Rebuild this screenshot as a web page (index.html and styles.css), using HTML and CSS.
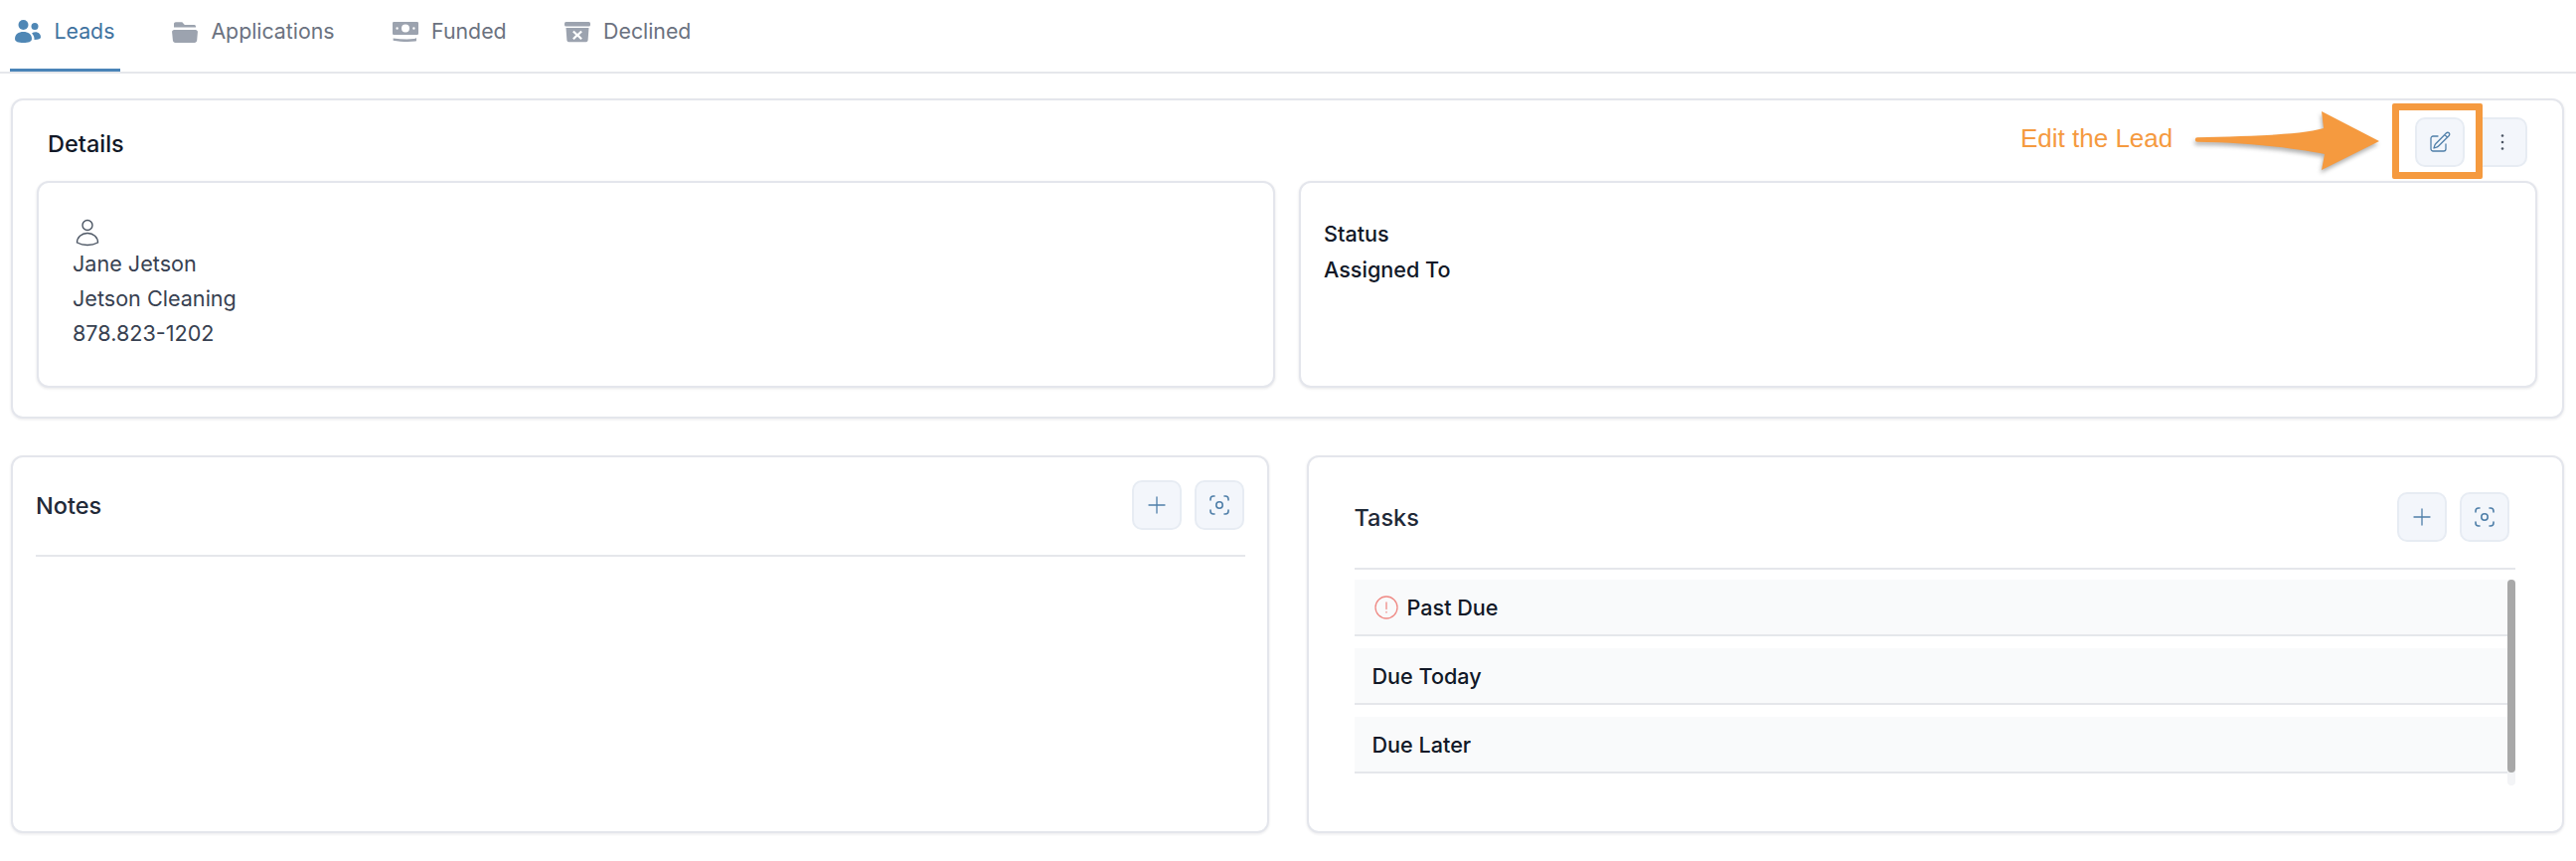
FILE: index.html
```html
<!DOCTYPE html>
<html lang="en">
<head>
<meta charset="utf-8">
<title>Lead details</title>
<link rel="stylesheet" href="styles.css">
</head>
<body>
<nav class="tabs">
  <a class="tab tab-active">
    <svg class="tab-icon" viewBox="0 0 26 24"><circle cx="8.500" cy="6" r="5"/><circle cx="20" cy="7.500" r="3.500"/><path d="M0 20c0-4.500 3.600-7 8.500-7s8.500 2.500 8.500 7c0 3-3.500 4-8.500 4S0 23 0 20z"/><path d="M17 14.500c1-.8 2.300-1.200 3.700-1.200 3.200 0 5.300 2.200 5.300 5.200 0 1.500-2 2.300-6.500 2.500.2-2.500-.6-4.700-2.500-6.500z"/></svg>
    <span>Leads</span>
  </a>
  <a class="tab">
    <svg class="tab-icon" viewBox="0 0 26 24"><path d="M2 5c0-1 .8-1.700 1.800-1.700h6.500l2.500 2.600h9.500c1 0 1.700.7 1.700 1.700v1H2z"/><path d="M2.200 11h21.600c1.200 0 2.200 1 2.100 2.200l-.7 8.300c-.1 1.400-1.200 2.500-2.600 2.500H3.500C2.100 24 1 22.900.9 21.500L.1 13.200C0 12 1 11 2.200 11z"/></svg>
    <span>Applications</span>
  </a>
  <a class="tab">
    <svg class="tab-icon" viewBox="0 0 26 24"><path fill-rule="evenodd" d="M1.200 3h23.600A1.200 1.200 0 0 1 26 4.200v10.600a1.200 1.200 0 0 1-1.200 1.200H1.200A1.200 1.200 0 0 1 0 14.800V4.200A1.200 1.200 0 0 1 1.200 3zM13 5.500a4 4 0 1 0 0 8 4 4 0 0 0 0-8zM4.600 8.300a1.200 1.200 0 1 0 0 2.400 1.200 1.200 0 0 0 0-2.400zM21.400 8.300a1.200 1.200 0 1 0 0 2.400 1.200 1.200 0 0 0 0-2.400z"/><path d="M.6 19.500c7 1 15 1.400 21 .6 1-.2 1.800-.6 2.400-1.100v3.200l-1.200.4c-7 .9-15 .4-22.200-.9z"/></svg>
    <span>Funded</span>
  </a>
  <a class="tab">
    <svg class="tab-icon" viewBox="0 0 26 24"><rect x="0" y="3" width="26" height="4.500" rx="1.500"/><path fill-rule="evenodd" d="M1.500 9h23l-.9 12.500a2 2 0 0 1-2 1.800H4.400a2 2 0 0 1-2-1.800zM9.600 11.700l-1.500 1.500 3.200 3.100-3.200 3.100 1.500 1.500 3.400-3.200 3.400 3.200 1.500-1.500-3.200-3.100 3.200-3.100-1.500-1.500-3.400 3.200z"/></svg>
    <span>Declined</span>
  </a>
</nav>

<main class="page">
  <section class="card details">
    <header class="details-head">
      <h2 class="details-title">Details</h2>
      <div class="actions">
        <button class="icon-btn" type="button">
          <svg class="btn-icon" viewBox="0 0 24 24"><path d="M16.862 4.487l1.687-1.688a1.875 1.875 0 112.652 2.652L10.582 16.070a4.500 4.500 0 01-1.897 1.130L6 18l.8-2.685a4.500 4.500 0 011.130-1.897l8.932-8.931zm0 0L19.500 7.125M18 14v4.750A2.250 2.250 0 0115.750 21H5.250A2.250 2.250 0 013 18.750V8.250A2.250 2.250 0 015.250 6H10"/></svg>
        </button>
        <button class="icon-btn icon-btn-more" type="button">
          <svg class="dots-icon" viewBox="0 0 4 18"><circle cx="2" cy="2.500" r="1.300"/><circle cx="2" cy="9" r="1.300"/><circle cx="2" cy="15.500" r="1.300"/></svg>
        </button>
      </div>
    </header>
    <div class="details-grid">
      <div class="subcard subcard-contact">
        <svg class="person-icon" viewBox="0 0 24 28"><circle cx="12" cy="6.500" r="5"/><path d="M1.500 24c0-5.500 4.500-9.500 10.500-9.500S22.500 18.500 22.500 24c-3 1.600-6.500 2.500-10.500 2.500S4.500 25.600 1.500 24z"/></svg>
        <p class="contact-line">Jane Jetson</p>
        <p class="contact-line">Jetson Cleaning</p>
        <p class="contact-line">878.823-1202</p>
      </div>
      <div class="subcard subcard-status">
        <p class="status-line">Status</p>
        <p class="status-line">Assigned To</p>
      </div>
    </div>
    <span class="note-text">Edit the Lead</span>
    <svg class="note-arrow" viewBox="0 0 200 70">
      <path class="note-arrow-fill" d="M2 32.300C50 31 105 30 129 23L127 6l58 30-58 29 3-16C100 43 50 37 2 36.700a2.200 2.200 0 0 1 0-4.400z"/>
    </svg>
    <span class="note-box"></span>
  </section>

  <div class="lower">
    <section class="card notes">
      <header class="panel-head notes-head">
        <h2 class="panel-title">Notes</h2>
        <div class="actions actions-wide">
          <button class="icon-btn" type="button">
            <svg class="btn-icon" viewBox="0 0 24 24"><path d="M12 4v16M4 12h16"/></svg>
          </button>
          <button class="icon-btn" type="button">
            <svg class="btn-icon btn-icon-focus" viewBox="0 0 24 24"><path d="M3 7V6a3 3 0 0 1 3-3h1M17 3h1a3 3 0 0 1 3 3v1M21 17v1a3 3 0 0 1-3 3h-1M7 21H6a3 3 0 0 1-3-3v-1"/><circle cx="12" cy="12" r="3.200"/></svg>
          </button>
        </div>
      </header>
    </section>

    <section class="card tasks">
      <header class="panel-head tasks-head">
        <h2 class="panel-title">Tasks</h2>
        <div class="actions actions-wide">
          <button class="icon-btn" type="button">
            <svg class="btn-icon" viewBox="0 0 24 24"><path d="M12 4v16M4 12h16"/></svg>
          </button>
          <button class="icon-btn" type="button">
            <svg class="btn-icon btn-icon-focus" viewBox="0 0 24 24"><path d="M3 7V6a3 3 0 0 1 3-3h1M17 3h1a3 3 0 0 1 3 3v1M21 17v1a3 3 0 0 1-3 3h-1M7 21H6a3 3 0 0 1-3-3v-1"/><circle cx="12" cy="12" r="3.200"/></svg>
          </button>
        </div>
      </header>
      <div class="task-list">
        <div class="task-row">
          <svg class="alert-icon" viewBox="0 0 24 24"><circle cx="12" cy="12" r="11"/><path d="M12 7v6.500M12 16.500v.6"/></svg>
          <span>Past Due</span>
        </div>
        <div class="task-row"><span>Due Today</span></div>
        <div class="task-row"><span>Due Later</span></div>
        <div class="scroll-track"><div class="scroll-thumb"></div></div>
      </div>
    </section>
  </div>
</main>
</body>
</html>
```
FILE: styles.css
```css
* { box-sizing: border-box; }

html, body {
  margin: 0;
  padding: 0;
  background: #fff;
  height: 866px;
  overflow: hidden;
  font-family: Inter, "Liberation Sans", sans-serif;
}

p, h2 { margin: 0; }

.tabs {
  display: flex;
  height: 74px;
  padding-left: 10px;
  border-bottom: 2px solid #e5e7eb;
}

.tab {
  display: flex;
  align-items: center;
  gap: 13.500px;
  height: 72px;
  padding: 0 5.500px 10px 5px;
  margin-right: 47.500px;
  font-size: 21.300px;
  font-weight: 400;
  color: #6b7280;
}

.tab-active {
  color: #3f729f;
  border-bottom: 3px solid #4a84b8;
  padding-bottom: 7px;
  margin-right: 47px;
}

.tab-icon {
  width: 26px;
  height: 24px;
  fill: #9ca3af;
  flex: none;
}

.tab-active .tab-icon { fill: #4f87b5; }

.page {
  padding: 25px 12px 0 11px;
}

.card {
  position: relative;
  background: #fff;
  border: 2px solid #e4e6ec;
  border-radius: 12px;
  box-shadow: 0 1px 3px rgba(17, 24, 39, 0.09);
}

.details {
  height: 322px;
  padding: 0 25px 0 24px;
}

.details-head {
  display: flex;
  align-items: center;
  justify-content: space-between;
  height: 81px;
  padding: 3px 10px 0 11px;
}

.details-title {
  margin-top: 2px;
  font-size: 23.500px;
  font-weight: 500;
  color: #111827;
}

.actions {
  display: flex;
  gap: 18px;
}

.actions-wide { gap: 13px; }

.icon-btn {
  display: flex;
  align-items: center;
  justify-content: center;
  width: 50px;
  height: 50px;
  padding: 0;
  background: #f3f6fb;
  border: 2px solid #e7ecf3;
  border-radius: 10px;
}

.icon-btn-more {
  width: 46px;
  margin-left: -1px;
  padding-right: 5px;
  border-left-color: transparent;
  border-top-left-radius: 0;
  border-bottom-left-radius: 0;
}

.btn-icon {
  width: 24px;
  height: 24px;
  fill: none;
  stroke: #4f7fa9;
  stroke-width: 1.300;
  stroke-linecap: round;
  stroke-linejoin: round;
}

.btn-icon-focus { stroke-width: 1.600; }

.dots-icon {
  width: 4px;
  height: 18px;
  fill: #4b5563;
}

.details-grid {
  display: grid;
  grid-template-columns: 1fr 1fr;
  gap: 24px;
}

.subcard {
  height: 208px;
  background: #fff;
  border: 2px solid #e4e6ec;
  border-radius: 12px;
  box-shadow: 0 1px 3px rgba(17, 24, 39, 0.10);
}

.subcard-contact { padding: 36px 34px 0; }
.subcard-status { padding: 33px 23px 0; }

.person-icon {
  display: block;
  width: 24px;
  height: 28px;
  margin: 0 0 0 3px;
  fill: none;
  stroke: #4b5563;
  stroke-width: 1.400;
}

.contact-line {
  font-size: 21.600px;
  line-height: 35px;
  color: #374151;
}

.status-line {
  font-size: 21.600px;
  line-height: 36px;
  font-weight: 500;
  color: #111827;
}

.note-box {
  position: absolute;
  left: 2394px;
  top: 3px;
  width: 91px;
  height: 76px;
  border: 7px solid #f59a3f;
  border-radius: 2px;
}

.note-text {
  position: absolute;
  left: 2020px;
  top: 23px;
  font-family: "Liberation Sans", Arial, sans-serif;
  font-size: 26px;
  color: #f59a3f;
  white-space: nowrap;
}

.note-arrow {
  position: absolute;
  left: 2196px;
  top: 5px;
  width: 200px;
  height: 70px;
  overflow: visible;
}

.note-arrow-fill {
  fill: #f59a3f;
  filter: drop-shadow(-1px 3px 2px rgba(60, 60, 60, 0.4));
}

.lower {
  display: grid;
  grid-template-columns: 1fr 1fr;
  gap: 38px;
  margin-top: 37px;
}

.notes, .tasks { height: 380px; }

.notes { padding: 23px 22px 0 23px; }
.tasks { padding: 35px 47px 0 46px; }

.panel-head {
  display: flex;
  align-items: center;
  justify-content: space-between;
  border-bottom: 2px solid #e5e7eb;
}

.notes-head { height: 77px; padding-bottom: 25px; }
.tasks-head { height: 78px; padding-bottom: 26px; }

.panel-title {
  font-size: 23.500px;
  font-weight: 500;
  color: #1f2937;
}

.notes-head .actions { margin-right: 1px; }

.tasks-head .actions { margin-right: 6px; }

.task-list {
  position: relative;
  display: flex;
  flex-direction: column;
  gap: 12px;
  margin-top: 10px;
}

.task-row {
  display: flex;
  align-items: center;
  gap: 9px;
  height: 57px;
  padding: 1px 0 0 18px;
  background: #f9fafb;
  border-bottom: 2px solid #e5e7eb;
  font-size: 21.600px;
  font-weight: 500;
  color: #111827;
}

.alert-icon {
  width: 24px;
  height: 24px;
  margin-left: 2px;
  fill: none;
  stroke: #ef8a85;
  stroke-width: 1.300;
  stroke-linecap: round;
}

.scroll-track {
  position: absolute;
  right: 0;
  top: 0;
  width: 8px;
  height: 207px;
  background: #f3f4f6;
  border-radius: 4px;
}

.scroll-thumb {
  width: 8px;
  height: 194px;
  background: #a8a8a8;
  border-radius: 4px;
}
```
